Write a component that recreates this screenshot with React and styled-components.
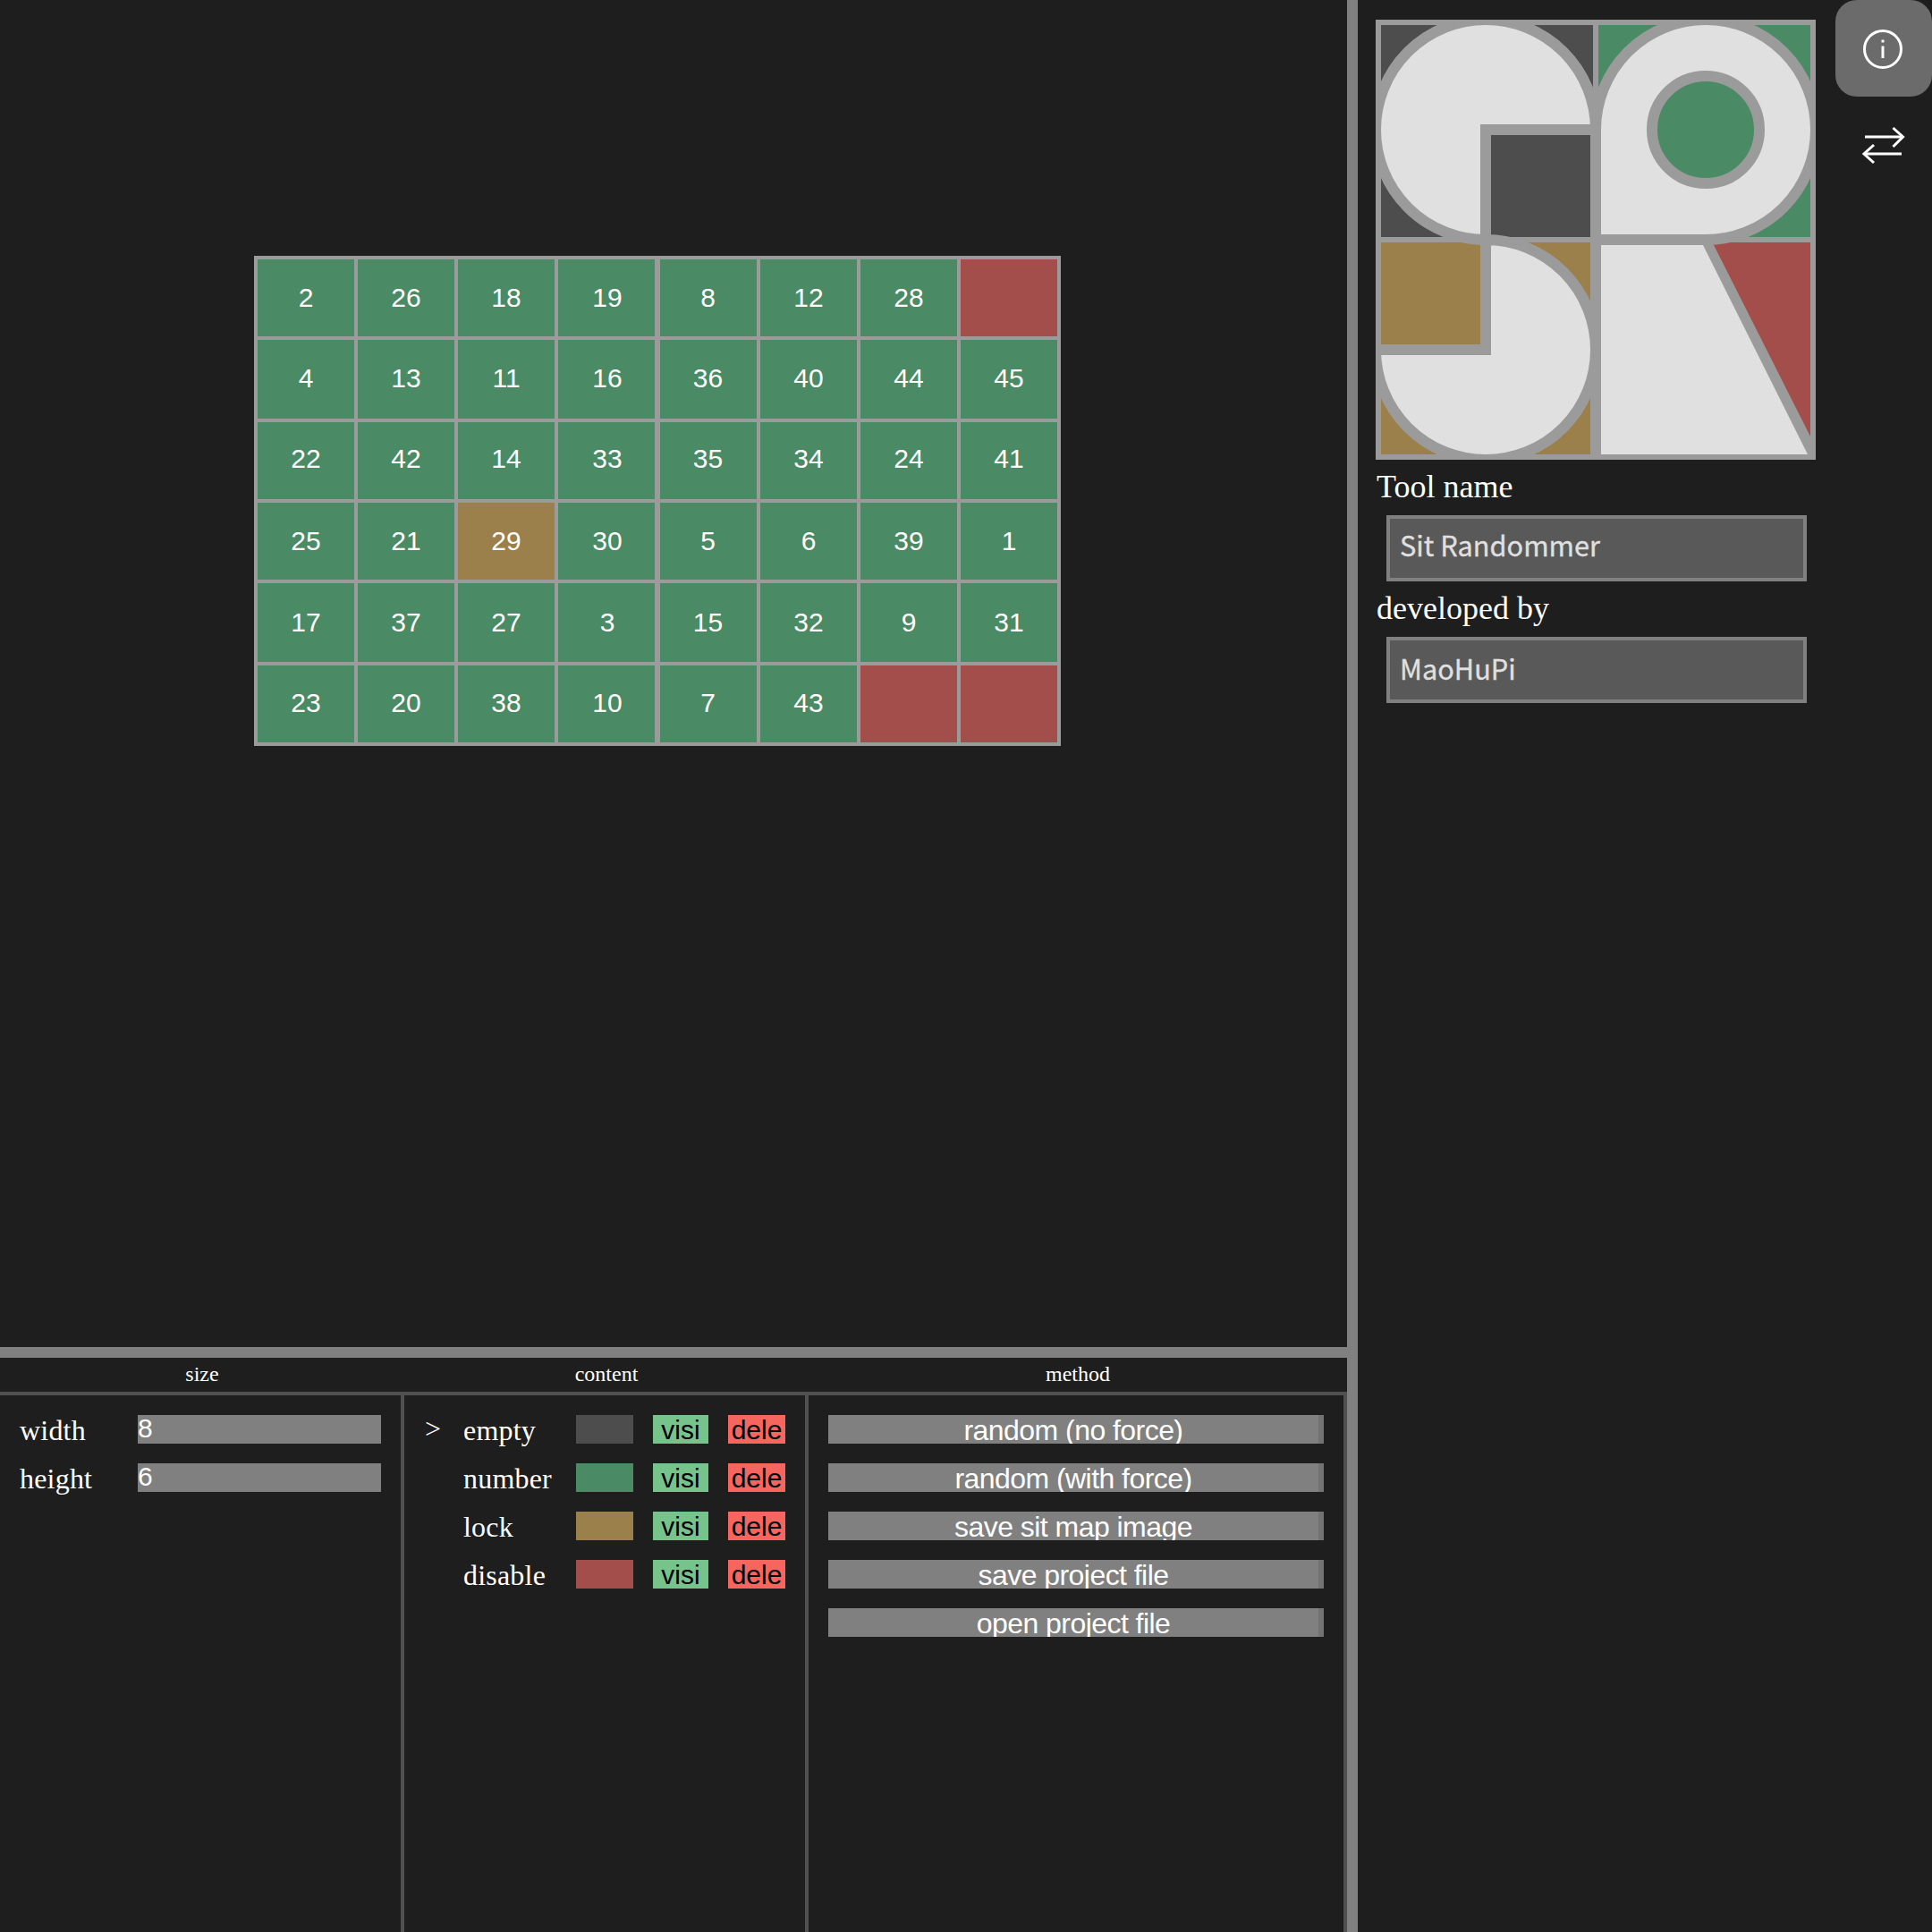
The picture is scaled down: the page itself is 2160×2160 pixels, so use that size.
import React from "react";
import styled, { createGlobalStyle } from "styled-components";

const GREEN = "#4a8a64";
const BROWN = "#9b804c";
const RED = "#a34e4b";
const DARK = "#4d4d4d";
const LINE = "#9b9b9b";
const LIGHT = "#e0e0e0";

const Global = createGlobalStyle`
  html, body { margin: 0; padding: 0; background: #1e1e1e; }
  body { font-family: "Liberation Serif", "Times New Roman", serif; color: #fff; }
  * { box-sizing: border-box; }
`;

const Page = styled.div`
  width: 2160px;
  height: 2160px;
  display: flex;
  overflow: hidden;
  background: #1e1e1e;
`;
const MainColumn = styled.div`
  width: 1518px;
  height: 100%;
  display: flex;
  flex-direction: column;
  border-right: 12px solid #808080;
`;
const Canvas = styled.div`
  height: 1518px;
  padding: 286px 0 0 284px;
  border-bottom: 12px solid #808080;
`;
const SeatGrid = styled.div`
  width: 902px;
  height: 548px;
  padding: 4px;
  display: grid;
  grid-template-columns: 108px 108px 108px 108px 110px 108px 108px 108px;
  grid-template-rows: 86px 88px 86px 86px 88px 86px;
  gap: 4px;
  background: ${LINE};
`;
const Seat = styled.div`
  display: flex;
  align-items: center;
  justify-content: center;
  padding-bottom: ${(p) => p.$lift}px;
  background: ${(p) => p.$bg};
  color: #fff;
  font: 30px "Liberation Sans", Arial, sans-serif;
  &:nth-child(8n + 4) {
    padding-left: 2px;
  }
  &:nth-child(8n + 5) {
    margin-left: 2px;
    padding-right: 1px;
  }
`;
const Panel = styled.div`
  flex: 1;
  display: grid;
  grid-template-columns: 452px 452px 602px;
  grid-template-rows: 42px 1fr;
`;
const PanelHead = styled.div`
  border-bottom: 4px solid #505050;
  font-size: 24px;
  line-height: 36px;
  text-align: center;
`;
const PanelBody = styled.div`
  border-right: 4px solid #505050;
  padding: 22px 0 0 22px;
  display: flex;
  flex-direction: column;
  gap: 22px;
`;
const Row = styled.div`
  display: flex;
  height: 32px;
  font-size: 32px;
  line-height: 34px;
  letter-spacing: 0.2px;
`;
const SizeLabel = styled.div`
  width: 132px;
`;
const NumberInput = styled.input`
  width: 272px;
  height: 32px;
  border: 0;
  padding: 0 0 2px;
  outline: 0;
  background: #808080;
  color: #fff;
  font: 30px "Liberation Sans", Arial, sans-serif;
`;
const Cursor = styled.div`
  width: 44px;
  padding-left: 1px;
  line-height: 31px;
`;
const ContentLabel = styled.div`
  width: 126px;
`;
const Swatch = styled.div`
  width: 64px;
  background: ${(p) => p.$bg};
`;
const SmallButton = styled.div`
  width: ${(p) => p.$w}px;
  margin-left: 22px;
  overflow: hidden;
  text-align: center;
  background: ${(p) => p.$bg};
  color: #000;
  font: 30px/34px "Liberation Sans", Arial, sans-serif;
  letter-spacing: 0;
`;
const ActionButton = styled.div`
  width: 554px;
  height: 32px;
  overflow: hidden;
  text-align: center;
  background: #808080;
  border-right: 6px solid #737373;
  color: #fff;
  font: 32px/34px "Liberation Sans", Arial, sans-serif;
  letter-spacing: -0.55px;
`;
const Side = styled.div`
  flex: 1;
  display: flex;
  padding-left: 20px;
`;
const About = styled.div`
  width: 492px;
  padding-top: 22px;
  margin-right: 22px;
`;
const Logo = styled.svg`
  display: block;
  width: 492px;
  height: 492px;
`;
const FieldLabel = styled.div`
  height: 62px;
  padding-left: 1px;
  font-size: 36px;
  line-height: 60px;
`;
const TextField = styled.input`
  display: block;
  width: 470px;
  height: 74px;
  margin-left: 12px;
  padding: 0 11px ${(p) => p.$lift}px;
  border: 4px solid #808080;
  outline: 0;
  background: #595959;
  color: ${LIGHT};
  font: 30.7px "Noto Sans CJK TC", "Noto Sans", sans-serif;
  -webkit-text-stroke: 0.3px ${LIGHT};
`;
const Tools = styled.div`
  display: flex;
  flex-direction: column;
`;
const ToolButton = styled.div`
  width: 108px;
  height: 108px;
  padding: ${(p) => (p.$active ? "2px 2px 0 0" : "0")};
  display: flex;
  align-items: center;
  justify-content: center;
  border-radius: 24px;
  background: ${(p) => (p.$active ? "#6b6b6b" : "transparent")};
`;

const seatRows = [
  { lift: 0, cells: [2, 26, 18, 19, 8, 12, 28, "x"] },
  { lift: 2, cells: [4, 13, 11, 16, 36, 40, 44, 45] },
  { lift: 4, cells: [22, 42, 14, 33, 35, 34, 24, 41] },
  { lift: 0, cells: [25, 21, "L29", 30, 5, 6, 39, 1] },
  { lift: 0, cells: [17, 37, 27, 3, 15, 32, 9, 31] },
  { lift: 2, cells: [23, 20, 38, 10, 7, 43, "x", "x"] },
];

const kinds = [
  ["empty", DARK],
  ["number", GREEN],
  ["lock", BROWN],
  ["disable", RED],
];
const actions = [
  "random (no force)",
  "random (with force)",
  "save sit map image",
  "save project file",
  "open project file",
];

function SeatCell({ v, lift }) {
  if (v === "x") return <Seat $bg={RED} $lift={lift} />;
  if (typeof v === "string") return <Seat $bg={BROWN} $lift={lift}>{v.slice(1)}</Seat>;
  return <Seat $bg={GREEN} $lift={lift}>{v}</Seat>;
}

function LogoArt() {
  return (
    <Logo viewBox="0 0 492 492">
      <rect width="492" height="492" fill={LINE} />
      <rect x="6" y="6" width="237" height="237" fill={DARK} />
      <rect x="249" y="6" width="237" height="237" fill={GREEN} />
      <rect x="6" y="249" width="234" height="237" fill={BROWN} />
      <polygon points="376.5,249 486,249 486,466" fill={RED} />
      <polygon points="252,252 366,252 483,486 252,486" fill={LIGHT} />
      <g stroke={LINE} strokeWidth="12" fill={LIGHT}>
        <path d="M123 246A123 123 0 1 1 246 123L123 123Z" />
        <path d="M123 246A123 123 0 1 1 0 369L123 369Z" />
        <path d="M246 246L369 246A123 123 0 1 0 246 123Z" />
        <circle cx="369" cy="123" r="60" fill={GREEN} />
      </g>
    </Logo>
  );
}

export default function App() {
  return (
    <Page>
      <Global />
      <MainColumn>
        <Canvas>
          <SeatGrid>
            {seatRows.flatMap((row, r) =>
              row.cells.map((v, c) => <SeatCell key={`${r}-${c}`} v={v} lift={row.lift} />)
            )}
          </SeatGrid>
        </Canvas>
        <Panel>
          <PanelHead>size</PanelHead>
          <PanelHead>content</PanelHead>
          <PanelHead>method</PanelHead>
          <PanelBody>
            <Row>
              <SizeLabel>width</SizeLabel>
              <NumberInput readOnly value="8" />
            </Row>
            <Row>
              <SizeLabel>height</SizeLabel>
              <NumberInput readOnly value="6" />
            </Row>
          </PanelBody>
          <PanelBody>
            {kinds.map(([name, color], i) => (
              <Row key={name}>
                <Cursor>{i === 0 ? ">" : ""}</Cursor>
                <ContentLabel>{name}</ContentLabel>
                <Swatch $bg={color} />
                <SmallButton $w={62} $bg="#76c48c">visi</SmallButton>
                <SmallButton $w={64} $bg="#f6665e">dele</SmallButton>
              </Row>
            ))}
          </PanelBody>
          <PanelBody>
            {actions.map((a) => (
              <ActionButton key={a}>{a}</ActionButton>
            ))}
          </PanelBody>
        </Panel>
      </MainColumn>
      <Side>
        <About>
          <LogoArt />
          <FieldLabel>Tool name</FieldLabel>
          <TextField readOnly value="Sit Randommer" $lift={9} />
          <FieldLabel>developed by</FieldLabel>
          <TextField readOnly value="MaoHuPi" $lift={6} />
        </About>
        <Tools>
          <ToolButton $active>
            <svg width="48" height="48" viewBox="0 0 48 48" fill="none" stroke="#fff" strokeWidth="3">
              <circle cx="24" cy="24" r="20.5" />
              <path d="M24 20.5V34" />
              <path d="M24 13.5V16.5" />
            </svg>
          </ToolButton>
          <ToolButton>
            <svg width="48" height="44" viewBox="0 0 48 44" fill="none" stroke="#fff" strokeWidth="3">
              <path d="M3 13H45" />
              <path d="M34.5 3L45.5 13L34.5 24" />
              <path d="M44 32H2" />
              <path d="M13 22L2 32L13 42" />
            </svg>
          </ToolButton>
        </Tools>
      </Side>
    </Page>
  );
}
